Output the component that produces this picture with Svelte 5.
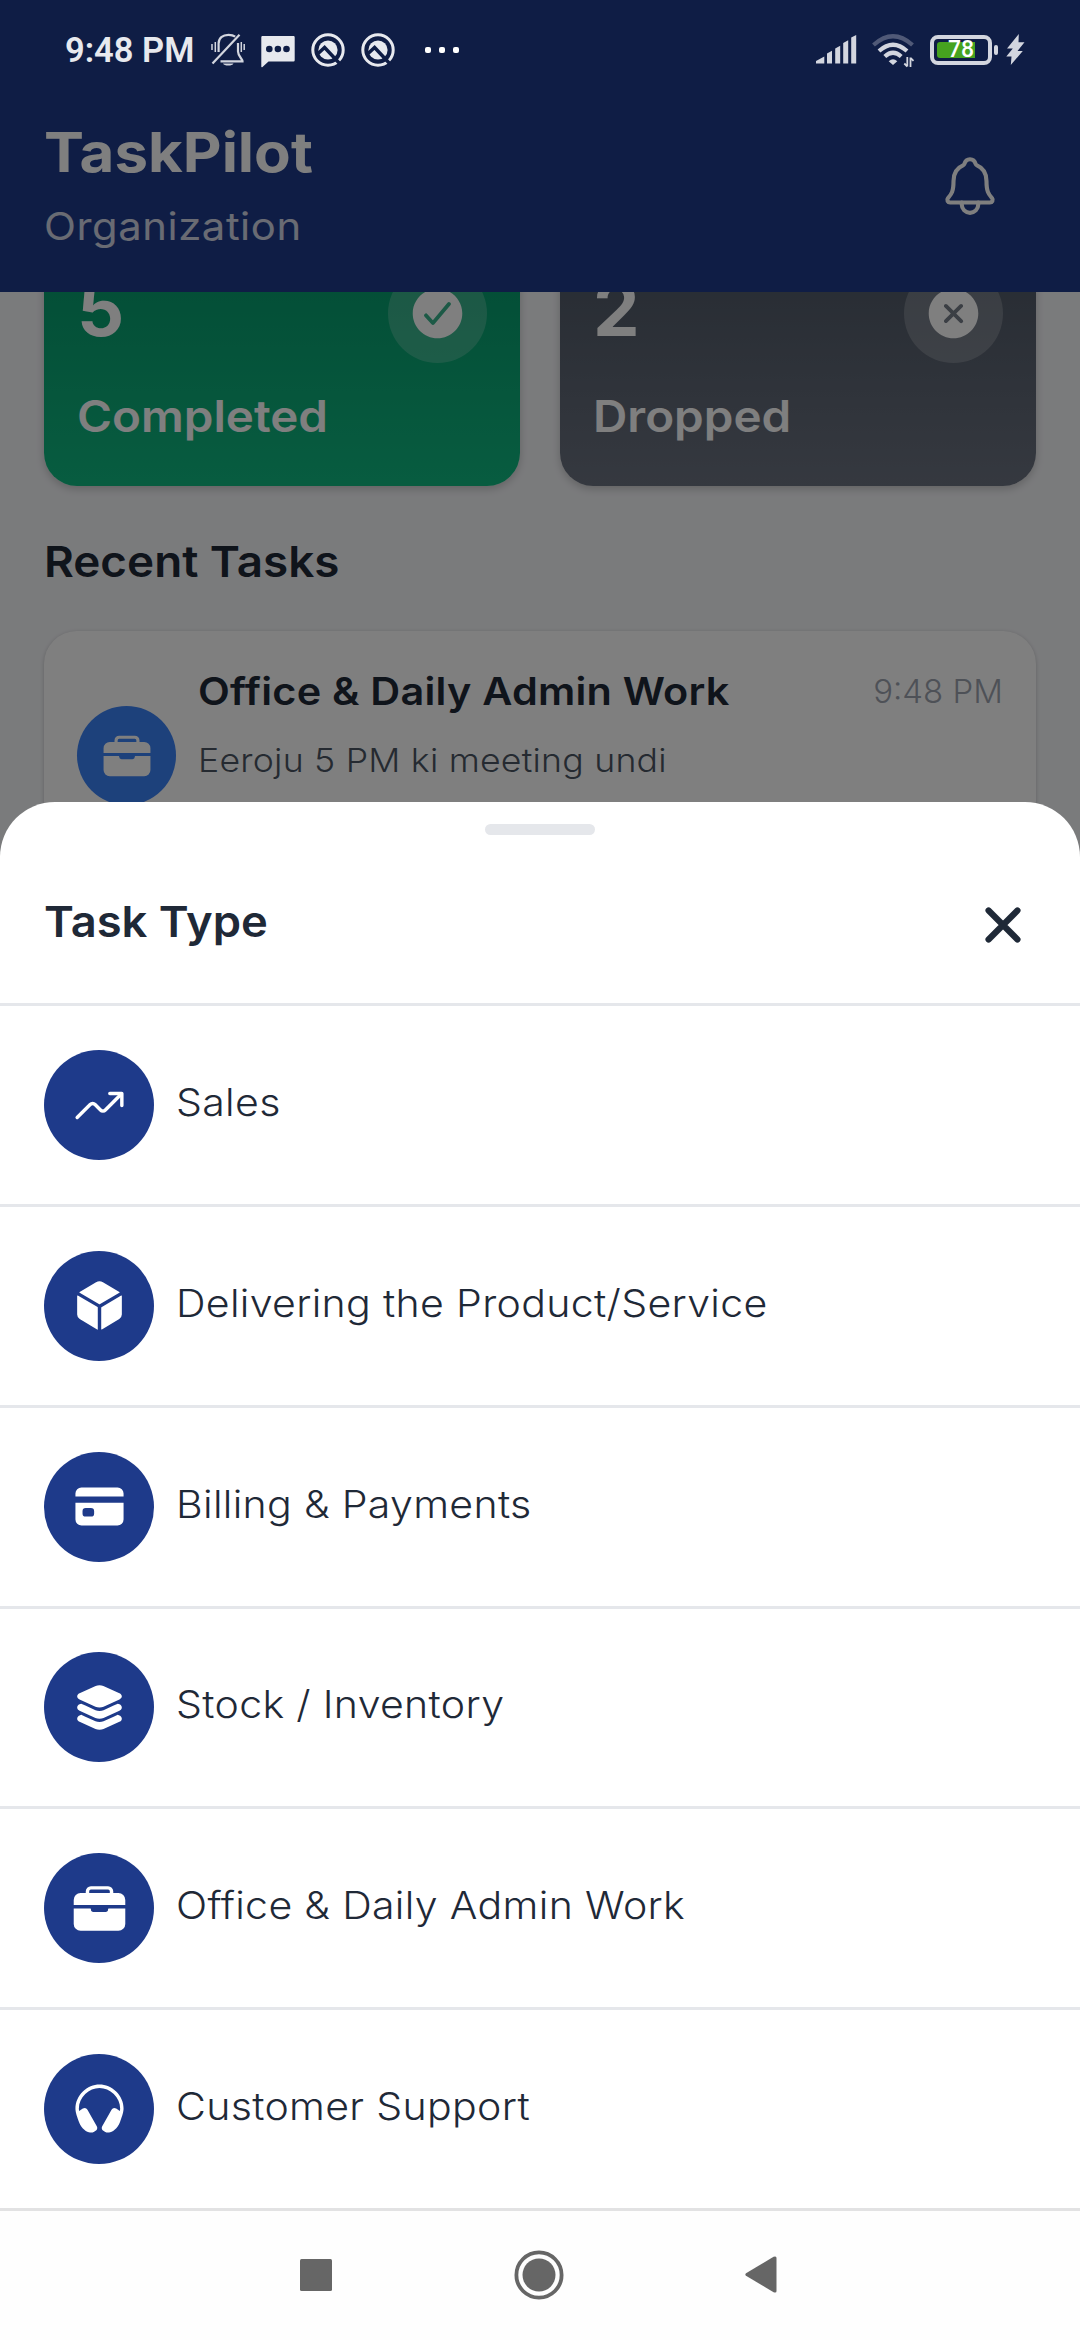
<script>
  // Icon paths live on a 512 grid
  const icons = {
    briefcase:
      'M496 176a64.07 64.07 0 00-64-64h-48V96a48.05 48.05 0 00-48-48H176a48.05 48.05 0 00-48 48v16H80a64.07 64.07 0 00-64 64v48h480zm-144-64H160V96a16 16 0 0116-16h160a16 16 0 0116 16zM336 264a24 24 0 01-24 24H200a24 24 0 01-24-24v-4a4 4 0 00-4-4H16v144a64 64 0 0064 64h352a64 64 0 0064-64V256H340a4 4 0 00-4 4z',
    cube:
      'M440.9 136.3a4 4 0 000-6.91L288.16 40.65a64.14 64.14 0 00-64.33 0L71.12 129.39a4 4 0 000 6.91L254 243.88a4 4 0 004.06 0zM238 270.81L54 163.48a4 4 0 00-6 3.46v173.92a48 48 0 0023.84 41.39L234 479.48a4 4 0 006-3.46V274.27a4 4 0 00-2-3.46zM272 275v200a4 4 0 006 3.46l162.15-97.23A48 48 0 00464 340.86V167a4 4 0 00-6-3.45l-184 108a4 4 0 00-2 3.45z',
    card:
      'M32 376a56 56 0 0056 56h336a56 56 0 0056-56V222H32zm66-76a30 30 0 0130-30h48a30 30 0 0130 30v20a30 30 0 01-30 30h-48a30 30 0 01-30-30zM424 80H88a56 56 0 00-56 56v26h448v-26a56 56 0 00-56-56z',
    layers:
      'M256 256c-13.47 0-26.94-2.39-37.44-7.17l-148-67.49C63.79 178.26 48 169.25 48 152.24s15.79-26 22.58-29.12l149.28-68.07c20.57-9.4 51.61-9.4 72.19 0l149.37 68.07c6.79 3.09 22.58 12.1 22.58 29.12s-15.79 26-22.58 29.11l-148 67.48C282.94 253.61 269.47 256 256 256zM441.36 226.81L426.27 220l-38.77 17.74-94 43c-10.5 4.8-24 7.19-37.44 7.19s-26.93-2.39-37.42-7.19l-94.07-43L85.79 220l-15.22 6.84C63.79 229.93 48 239 48 256s15.79 26.08 22.56 29.17l148 67.63C229 357.6 242.49 360 256 360s26.94-2.4 37.44-7.19l147.87-67.61c6.81-3.09 22.69-12.11 22.69-29.2s-15.77-26.07-22.64-29.19zM441.36 330.8l-15.09-6.8-38.77 17.73-94 42.95c-10.5 4.78-24 7.18-37.44 7.18s-26.93-2.39-37.42-7.18l-94.07-43L85.79 324l-15.22 6.84C63.79 333.93 48 343 48 360s15.79 26.07 22.56 29.15l148 67.59C229 461.52 242.54 464 256 464s26.88-2.48 37.38-7.27l147.92-67.57c6.82-3.08 22.7-12.1 22.7-29.16s-15.77-26.07-22.64-29.2z',
    headset:
      'M411.16 97.46C368.43 55.86 311.88 32 256 32S143.57 55.86 100.84 97.46C56.45 140.67 32 197 32 256c0 26.67 8.75 61.09 32.88 125.55S137 473 157.27 477.41c5.81 1.27 12.62 2.59 18.73 2.59a60.06 60.06 0 0030-8l14-8c15.07-8.82 19.47-28.13 10.8-43.35L143.88 268.08a31.73 31.73 0 00-43.57-11.76l-13.69 8a56.49 56.49 0 00-14 11.59 4 4 0 01-7-2A114.68 114.68 0 0164 256c0-50.31 21-98.48 59.16-135.61C160 84.55 208.39 64 256 64s96 20.55 132.84 56.39C427 157.52 448 205.69 448 256a114.68 114.68 0 01-1.68 17.91 4 4 0 01-7 2 56.49 56.49 0 00-14-11.59l-13.69-8a31.73 31.73 0 00-43.57 11.76L281.2 420.65c-8.67 15.22-4.27 34.53 10.8 43.35l14 8a60.06 60.06 0 0030 8c6.11 0 12.92-1.32 18.73-2.59C375 473 423 446 447.12 381.55S480 282.67 480 256c0-59-24.45-115.33-68.84-158.54z',
    check:
      'M256 48C141.31 48 48 141.31 48 256s93.31 208 208 208 208-93.31 208-208S370.69 48 256 48zm108.25 138.29l-134.4 160a16 16 0 01-12 5.71h-.27a16 16 0 01-11.89-5.3l-57.6-64a16 16 0 1123.78-21.4l45.29 50.32 122.59-145.91a16 16 0 0124.5 20.58z',
    cross:
      'M256 48C141.31 48 48 141.31 48 256s93.31 208 208 208 208-93.31 208-208S370.69 48 256 48zm75.31 260.69a16 16 0 11-22.62 22.62L256 278.63l-52.69 52.68a16 16 0 01-22.62-22.62L233.37 256l-52.68-52.69a16 16 0 0122.62-22.62L256 233.37l52.69-52.68a16 16 0 0122.62 22.62L278.63 256z',
  };

  const stats = [
    { count: 5, label: 'Completed', kind: 'completed', icon: 'check' },
    { count: 2, label: 'Dropped', kind: 'dropped', icon: 'cross' },
  ];

  const taskTypes = [
    { name: 'Sales', icon: 'trending' },
    { name: 'Delivering the Product/Service', icon: 'cube' },
    { name: 'Billing & Payments', icon: 'card' },
    { name: 'Stock / Inventory', icon: 'layers' },
    { name: 'Office & Daily Admin Work', icon: 'briefcase' },
    { name: 'Customer Support', icon: 'headset' },
  ];

  let sheetOpen = $state(true);
</script>

<div class="screen">
  <header class="app-header">
    <div>
      <h1>TaskPilot</h1>
      <p>Organization</p>
    </div>
    <svg class="bell" viewBox="0 0 512 512">
      <path d="M427.68 351.43C402 320 383.87 304 383.87 217.35 383.87 138 343.35 109.73 310 96c-4.43-1.82-8.6-6-9.95-10.55C294.2 65.54 277.8 48 256 48s-38.21 17.55-44 37.47c-1.35 4.6-5.52 8.71-9.95 10.53-33.39 13.75-73.87 41.92-73.87 121.35C128.13 304 110 320 84.32 351.43 73.68 364.45 83 384 101.61 384h308.88c18.51 0 27.77-19.61 17.19-32.57z" />
      <path d="M320 384v16a64 64 0 01-128 0v-16" />
    </svg>
  </header>

  <main>
    <div class="scrolled">
      <div class="stats">
        {#each stats as stat}
          <div class="stat {stat.kind}">
            <div class="stat-top">
              <span class="count">{stat.count}</span>
              <span class="stat-icon">
                <svg viewBox="0 0 512 512"><path d={icons[stat.icon]} /></svg>
              </span>
            </div>
            <span class="stat-label">{stat.label}</span>
          </div>
        {/each}
      </div>

      <h2>Recent Tasks</h2>

      <div class="task">
        <span class="task-icon">
          <svg viewBox="0 0 512 512"><path d={icons.briefcase} /></svg>
        </span>
        <div class="task-body">
          <div class="task-head">
            <strong>Office &amp; Daily Admin Work</strong>
            <time>9:48 PM</time>
          </div>
          <p>Eeroju 5 PM ki meeting undi</p>
        </div>
      </div>
    </div>
  </main>

  {#if sheetOpen}
    <div class="scrim"></div>
    <section class="sheet">
      <div class="handle"></div>
      <div class="sheet-head">
        <h3>Task Type</h3>
        <button aria-label="Close" onclick={() => (sheetOpen = false)}>
          <svg viewBox="0 0 512 512"><path d="M368 368L144 144M368 144L144 368" /></svg>
        </button>
      </div>
      <ul>
        {#each taskTypes as type}
          <li>
            <span class="type-icon">
              <svg viewBox="0 0 512 512">
                {#if type.icon === 'trending'}
                  <g class="line">
                    <path d="M352 144h112v112" />
                    <path d="M48 368l121.37-121.37a32 32 0 0145.26 0l50.74 50.74a32 32 0 0045.26 0L448 160" />
                  </g>
                {:else}
                  <path d={icons[type.icon]} />
                {/if}
              </svg>
            </span>
            <span class="type-name">{type.name}</span>
          </li>
        {/each}
      </ul>
      <nav>
        <svg width="32" height="32" viewBox="0 0 32 32"><rect width="32" height="32" rx="1.5" /></svg>
        <svg width="50" height="50" viewBox="0 0 50 50">
          <circle class="ring" cx="25" cy="25" r="22.6" />
          <circle cx="25" cy="25" r="16.5" />
        </svg>
        <svg width="32" height="37" viewBox="0 0 32 37"><path d="M1 17.2L28.6 .8Q31.5 -.4 31.5 2V35Q31.5 37.4 28.6 36.2L1 19.8Q-.4 18.5 1 17.2z" /></svg>
      </nav>
    </section>
  {/if}

  <div class="status">
    <div class="status-left">
      <span class="clock">9:48 PM</span>
      <svg class="muted" width="34" height="34" viewBox="0 0 34 34">
        <g fill="none" stroke="currentColor" stroke-width="2.2">
          <path d="M7.6 19V10.5C7.6 5 11.5 1.8 17.5 1.8C20.3 1.8 22.5 2.4 24.2 3.7" />
          <path d="M27 10V18.5C27 23 31.5 26 31.5 28.3H9.5" />
          <path d="M1.5 30.5L28.5 1.8" />
          <path d="M1 11v6M4.3 9v10M30.3 9v10M33.2 11v6" stroke-width="1.5" />
        </g>
        <path d="M12 30.5h10.5a5.5 3 0 01-10.5 0z" fill="currentColor" />
      </svg>
      <svg class="chat" width="34" height="32" viewBox="0 0 34 32">
        <path d="M1.5 0h31q1.2 0 1.2 1.2v23q0 1.2-1.2 1.2H7.5L1.5 31Q.3 31.7.3 30.5V1.2Q.3 0 1.5 0z" fill="currentColor" />
        <g fill="#0f1d45">
          <circle cx="8.3" cy="13" r="3.3" />
          <circle cx="16.9" cy="13" r="3.3" />
          <circle cx="25.5" cy="13" r="3.3" />
        </g>
      </svg>
      {#each [1, 2] as n (n)}
        <svg class="dev" width="34" height="34" viewBox="0 0 34 34">
          <circle cx="17" cy="17" r="15.2" fill="none" stroke="currentColor" stroke-width="3" />
          <circle cx="17" cy="17" r="9.6" fill="currentColor" />
          <path d="M6 21.5L13.6 14.5L30 32" fill="none" stroke="#0f1d45" stroke-width="3.4" />
        </svg>
      {/each}
      <span class="more"><i></i><i></i><i></i></span>
    </div>
    <div class="status-right">
      <svg class="signal" width="41" height="30" viewBox="0 0 41 30">
        <path d="M0 26L8.3 21.5V28.5H0zM11 18.5L16 15.8V28.5H11zM19.2 13.5L24.2 10.8V28.5H19.2zM27.2 8L32.2 5.3V28.5H27.2zM35.2 2.5L40.2 0V28.5H35.2z" fill="currentColor" />
      </svg>
      <svg class="wifi" width="43" height="34" viewBox="0 0 43 34">
        <g fill="none" stroke="currentColor" stroke-width="4.2">
          <path d="M1.5 11Q21 -6.5 40.5 11" opacity=".33" />
          <path d="M7 17Q21 4.5 35 17" />
          <path d="M12.8 22.5Q21 15 29.2 22.5" />
        </g>
        <path d="M21 31l-4.3-3.8q4.3-3.8 8.6 0z" fill="currentColor" />
        <path d="M35.3 23v9.5M38.5 33v-9.5M32.3 29.5l3 3M38.5 23.8l3 3" fill="none" stroke="currentColor" stroke-width="1.8" />
      </svg>
      <span class="battery"><span class="level"></span><b>78</b></span>
      <span class="tip"></span>
      <svg class="bolt" width="19" height="31" viewBox="0 0 19 31">
        <path d="M12.8 0L1 14.5H6.8L.3 22.5H5.5L4.8 31L16.8 17H11.5L18.5 8.2H12.5z" fill="currentColor" />
      </svg>
    </div>
  </div>
</div>

<style>
  :global(body) {
    margin: 0;
    background: #fff;
  }

  .screen {
    position: relative;
    width: 1080px;
    height: 2340px;
    overflow: hidden;
    background: #f5f6f9;
    font-family: Inter, 'Open Sans', sans-serif;
    color: #1f2937;
  }

  h1, h2, h3, p, ul {
    margin: 0;
    padding: 0;
    font-weight: 400;
  }

  svg {
    display: block;
    flex: none;
  }

  h1, h2, h3, p, strong, .stat-label, .type-name {
    transform-origin: left center;
    white-space: nowrap;
  }

  .app-header {
    display: flex;
    justify-content: space-between;
    align-items: flex-start;
    box-sizing: border-box;
    height: 292px;
    padding: 119px 77px 0 44px;
    background: #1e3a8a;
    color: #fff;
  }

  h1 {
    font-size: 55px;
    line-height: 66px;
    font-weight: 700;
    transform: scaleX(1.09);
  }

  .app-header p {
    margin-top: 18px;
    font-size: 38px;
    line-height: 47px;
    letter-spacing: 0.5px;
    opacity: 0.8;
    transform: scaleX(1.1);
  }

  .bell {
    width: 66px;
    height: 66px;
    margin-top: 34px;
    fill: none;
    stroke: #fff;
    stroke-width: 32;
    stroke-linecap: round;
    stroke-linejoin: round;
  }

  main {
    overflow: hidden;
    height: 600px;
  }

  .scrolled {
    margin-top: -61px;
    padding: 0 44px;
  }

  .stats {
    display: grid;
    grid-template-columns: 1fr 1fr;
    gap: 40px;
  }

  .stat {
    box-sizing: border-box;
    height: 255px;
    padding: 33px;
    border-radius: 33px;
    color: #fff;
    box-shadow: 0 3px 8px rgba(0, 0, 0, 0.2);
  }

  .completed {
    background: linear-gradient(#059669, #10b981);
  }

  .dropped {
    background: linear-gradient(#4b5563, #6b7280);
  }

  .stat-top {
    display: flex;
    justify-content: space-between;
    align-items: flex-start;
  }

  .count {
    font-size: 74px;
    line-height: 90px;
    font-weight: 700;
  }

  .stat-icon {
    display: grid;
    place-items: center;
    width: 99px;
    height: 99px;
    border-radius: 50%;
    background: rgba(255, 255, 255, 0.2);
  }

  .stat-icon svg {
    width: 61px;
    height: 61px;
    fill: #fff;
  }

  .stat-label {
    display: block;
    margin-top: 27px;
    font-size: 44px;
    line-height: 53px;
    font-weight: 600;
    transform: scaleX(1.08);
  }

  h2 {
    margin: 49px 0 43px;
    font-size: 43px;
    line-height: 53px;
    font-weight: 600;
    transform: scaleX(1.065);
  }

  .task {
    display: flex;
    align-items: center;
    gap: 22px;
    box-sizing: border-box;
    height: 249px;
    padding: 0 33px;
    border-radius: 33px;
    background: #fff;
    box-shadow: 0 1px 4px rgba(0, 0, 0, 0.2);
  }

  .task-icon {
    display: grid;
    place-items: center;
    flex: none;
    width: 99px;
    height: 99px;
    border-radius: 50%;
    background: #3b82f6;
  }

  .task-icon svg {
    width: 50px;
    height: 50px;
    fill: #fff;
  }

  .task-body {
    flex: 1;
    align-self: flex-start;
    padding-top: 37px;
  }

  .task-head {
    display: flex;
    justify-content: space-between;
    line-height: 47px;
  }

  .task-head strong {
    font-size: 38px;
    font-weight: 600;
    letter-spacing: 0.2px;
    transform: scaleX(1.09);
  }

  time {
    font-size: 33px;
    font-weight: 350;
    color: #9ca3af;
  }

  .task p {
    margin-top: 23px;
    font-size: 33px;
    line-height: 44px;
    font-weight: 350;
    letter-spacing: 0.2px;
    color: #4b5563;
    transform: scaleX(1.08);
  }

  .scrim {
    position: absolute;
    inset: 0;
    background: rgba(0, 0, 0, 0.5);
  }

  .sheet {
    position: absolute;
    left: 0;
    right: 0;
    top: 802px;
    bottom: 0;
    display: flex;
    flex-direction: column;
    border-radius: 55px 55px 0 0;
    background: #fff;
  }

  .handle {
    flex: none;
    align-self: center;
    width: 110px;
    height: 11px;
    margin-top: 22px;
    border-radius: 5.5px;
    background: #e5e7eb;
  }

  .sheet-head {
    display: flex;
    justify-content: space-between;
    align-items: flex-start;
    box-sizing: border-box;
    height: 171.25px;
    padding: 57px 44px 0;
    border-bottom: 3px solid #e5e7eb;
  }

  h3 {
    margin-top: 3px;
    font-size: 43px;
    line-height: 53px;
    font-weight: 600;
    transform: scaleX(1.055);
  }

  .sheet-head button {
    padding: 0;
    border: none;
    background: none;
    cursor: pointer;
  }

  .sheet-head svg {
    width: 66px;
    height: 66px;
    stroke: #1f2937;
    stroke-width: 48;
    stroke-linecap: round;
  }

  ul {
    list-style: none;
  }

  li {
    display: flex;
    align-items: center;
    gap: 22px;
    box-sizing: border-box;
    height: 200.75px;
    padding: 0 44px;
    border-bottom: 3px solid #e5e7eb;
  }

  li:last-child {
    border-color: #e2e2e3;
  }

  .type-icon {
    display: grid;
    place-items: center;
    width: 110px;
    height: 110px;
    border-radius: 50%;
    background: #1e3a8a;
  }

  .type-icon svg {
    width: 55px;
    height: 55px;
    fill: #fff;
  }

  .type-icon .line {
    fill: none;
    stroke: #fff;
    stroke-width: 32;
    stroke-linecap: round;
    stroke-linejoin: round;
  }

  .type-name {
    padding-bottom: 6px;
    font-size: 38px;
    font-weight: 360;
    letter-spacing: 0.3px;
    transform: scaleX(1.08);
  }

  nav {
    display: flex;
    flex: 1;
    align-items: center;
    justify-content: space-between;
    padding: 0 303px 1px 300px;
    background: #fefefe;
    fill: #666;
  }

  .ring {
    fill: none;
    stroke: #666;
    stroke-width: 3.8;
  }

  .status {
    position: absolute;
    left: 0;
    right: 0;
    top: 0;
    display: flex;
    justify-content: space-between;
    height: 99px;
    padding: 0 55px 0 65px;
    font-family: Roboto, sans-serif;
  }

  .status-left, .status-right {
    display: flex;
    align-items: center;
    color: #e7e9ee;
  }

  .status-right {
    color: #d3d6df;
  }

  .clock {
    width: 146px;
    font-size: 34.5px;
    line-height: 100px;
    font-weight: 600;
    white-space: nowrap;
  }

  .muted {
    color: #d3d6df;
  }

  .chat {
    margin: 4px 16px 0;
  }

  .dev {
    margin-right: 16px;
  }

  .more {
    display: flex;
    gap: 8px;
    margin-left: 14px;
  }

  .more i {
    width: 6px;
    height: 6px;
    border-radius: 2px;
    background: #fff;
  }

  .wifi {
    margin: 2px 15px 0 15px;
  }

  .battery {
    display: grid;
    align-items: center;
    box-sizing: border-box;
    width: 62px;
    height: 30px;
    padding-left: 3px;
    border: 4px solid #d3d6df;
    border-radius: 8px;
  }

  .level, .battery b {
    grid-area: 1 / 1;
  }

  .level {
    width: 38px;
    height: 16px;
    border-radius: 3px 0 0 3px;
    background: #46a31f;
  }

  .battery b {
    margin-left: 11px;
    font-size: 23px;
    line-height: 22px;
    font-weight: 500;
    color: #fff;
  }

  .tip {
    width: 4px;
    height: 10px;
    margin: 0 8px 0 2px;
    border-radius: 2px;
    background: #d3d6df;
  }
</style>
